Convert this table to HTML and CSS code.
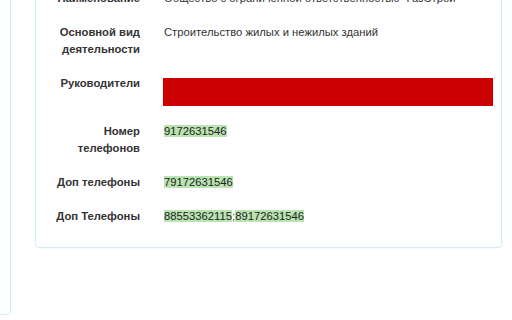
FILE: index.html
```html
<!DOCTYPE html>
<html lang="ru">
<head>
  <meta charset="UTF-8">
  <title>Карточка организации</title>
  <meta name="viewport" content="width=device-width">
  <link rel="stylesheet" href="styles.css">
</head>
<body>
<div class="page">
  <div class="sidebar"></div>
  <div class="main">
    <div class="card">
      <dl class="info">
        <dt>Наименование</dt>
        <dd>Общество с ограниченной ответственностью "ГазСтрой"</dd>

        <dt>Основной вид деятельности</dt>
        <dd>Строительство жилых и нежилых зданий</dd>

        <dt>Руководители</dt>
        <dd><div class="hidden-block"></div></dd>

        <dt>Номер телефонов</dt>
        <dd><span class="mark">9172631546</span></dd>

        <dt>Доп телефоны</dt>
        <dd><span class="mark">79172631546</span></dd>

        <dt>Доп Телефоны</dt>
        <dd><span class="mark">88553362115</span>;<span class="mark">89172631546</span></dd>
      </dl>
    </div>
  </div>
</div>
</body>
</html>
```

FILE: styles.css
```css
body {
  font-family: "Liberation Sans", Arial, sans-serif;
  font-size: 11.25px;
  line-height: 17px;
  color: #333;
  margin: 0;
  padding: 0;
  background: #fff;
  overflow: hidden;
}

.page {
  display: flex;
  align-items: flex-start;
  margin-top: -27px;
}

.sidebar {
  flex: none;
  width: 40px;
  height: 340px;
  margin-left: -30px;
  border: 1px solid #d3edf4;
  border-left: 0;
  border-radius: 0 0 4px 0;
}

.main {
  flex: 1;
  min-width: 0;
  padding-left: 24px;
}

.card {
  box-sizing: border-box;
  width: 467px;
  border: 1px solid #d3edf4;
  border-radius: 4px;
  padding: 16px 15px 22px;
  box-shadow: 0 1px 1px rgba(0, 0, 0, 0.03);
}

.info {
  display: grid;
  grid-template-columns: 89px 1fr;
  column-gap: 23px;
  row-gap: 17px;
  margin: 0;
}

.info dt {
  font-weight: bold;
  text-align: right;
  color: #333;
}

.info dd {
  margin: 0;
  padding-left: 1px;
}

.hidden-block {
  width: 330px;
  height: 28px;
  margin: 3px 0 0 -1px;
  background: #cc0000;
}

.mark {
  background: #b9e3b1;
  color: #222;
}
```
